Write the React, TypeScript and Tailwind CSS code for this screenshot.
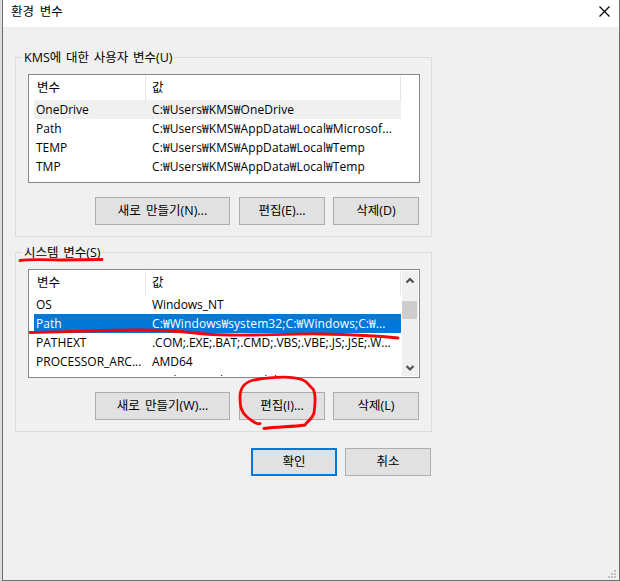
import { clsx } from "clsx";

type Variable = { name: string; value: string; active?: boolean };

const userVariables: Variable[] = [
  { name: "OneDrive", value: "C:₩Users₩KMS₩OneDrive", active: true },
  { name: "Path", value: "C:₩Users₩KMS₩AppData₩Local₩Microsof..." },
  { name: "TEMP", value: "C:₩Users₩KMS₩AppData₩Local₩Temp" },
  { name: "TMP", value: "C:₩Users₩KMS₩AppData₩Local₩Temp" },
];

const systemVariables: Variable[] = [
  { name: "OS", value: "Windows_NT" },
  { name: "Path", value: "C:₩Windows₩system32;C:₩Windows;C:₩...", active: true },
  { name: "PATHEXT", value: ".COM;.EXE;.BAT;.CMD;.VBS;.VBE;.JS;.JSE;.W..." },
  { name: "PROCESSOR_ARC...", value: "AMD64" },
  { name: "PROCESSOR_IDE...", value: "Intel64 Family 6 Model 158 Stepping 1..." },
];

const Button = ({
  label,
  wide,
  primary,
}: {
  label: string;
  wide?: boolean;
  primary?: boolean;
}) => (
  <button
    className={clsx(
      "flex h-7 items-center justify-center bg-[#e1e1e1] text-[12.5px] whitespace-nowrap [word-spacing:2px]",
      wide ? "mr-px w-[135px]" : "w-[86px]",
      primary ? "border-2 border-[#0078d7]" : "border border-[#adadad]",
    )}
  >
    {label}
  </button>
);

const ScrollBar = () => (
  <div className="mt-px mr-px flex h-[105px] w-4 flex-col bg-[#f0f0f0]">
    <svg className="h-[30px] w-4 shrink-0" viewBox="0 0 16 30" fill="none">
      <path d="M4.500 11.500 8 8l3.500 3.500" stroke="#505050" strokeWidth="2.2" />
    </svg>
    <div className="h-[18px] w-[15px] shrink-0 bg-[#cdcdcd]" />
    <svg className="mt-auto h-[17px] w-4 shrink-0" viewBox="0 0 16 17" fill="none">
      <path d="M4.500 7 8 10.500 11.500 7" stroke="#505050" strokeWidth="2.2" />
    </svg>
  </div>
);

const VariableList = ({
  rows,
  system,
}: {
  rows: Variable[];
  system?: boolean;
}) => (
  <div className="mt-2 ml-3 flex h-[109px] w-[392px] justify-between overflow-hidden border border-[#828790] bg-white">
    <div className="ml-[5px] h-[106px] w-[367px] overflow-hidden pt-px">
      <div className="flex h-6 text-[12.5px] leading-[23px]">
        <div className="w-28 border-r border-[#e5e5e5] pl-[3px]">변수</div>
        <div className="flex-1 border-r border-[#e5e5e5] pl-[6px]">값</div>
      </div>
      {rows.map((row) => (
        <div
          key={row.name}
          className={clsx(
            "flex h-[19px] text-[12px] leading-[19px] whitespace-nowrap",
            row.active && (system ? "bg-[#0078d7] text-white" : "bg-[#f0f0f0]"),
          )}
        >
          <div className="w-28 pl-[2px]">{row.name}</div>
          <div
            className={clsx(
              "flex-1 pl-[6px]",
              row.value.includes("₩") ? "tracking-[0.1px]" : "tracking-[-0.04px]",
            )}
          >
            {row.value}
          </div>
        </div>
      ))}
    </div>
    {system && <ScrollBar />}
  </div>
);

const VariableGroup = ({
  title,
  rows,
  keys,
  system,
}: {
  title: string;
  rows: Variable[];
  keys: [string, string, string];
  system?: boolean;
}) => (
  <fieldset className="h-[189px] w-[417px] border border-[#dcdcdc]">
    <legend className="ml-[6px] h-[18px] px-[2px] text-[12.5px] leading-[19px] whitespace-nowrap [word-spacing:1.5px]">
      {title}
    </legend>
    <VariableList rows={rows} system={system} />
    <div className="mt-[14px] mr-3 flex justify-end gap-2">
      <Button label={`새로 만들기(${keys[0]})...`} wide />
      <Button label={`편집(${keys[1]})...`} />
      <Button label={`삭제(${keys[2]})`} />
    </div>
  </fieldset>
);

const PenMarks = () => (
  <svg
    className="pointer-events-none absolute inset-0 h-[581px] w-[620px]"
    viewBox="0 0 620 581"
    fill="none"
    stroke="#fb0007"
    strokeWidth="2.8"
    strokeLinecap="round"
    strokeLinejoin="round"
  >
    <path d="M20 260.500C30 258.800 44 259.500 60 260L102 259.500" />
    <path d="M30 332.500C65 332 100 330 140 330C170 330 185 332 205 334C240 337 280 333.500 320 334C350 334.500 375 335.500 398 338" />
    <path d="M260 423.500C257 425 252 421 247 417C241 412 240 406 240 397C240 387 245 382 254 380C269 377.500 291 375.500 303 380C308 382 309 386 313 389C316 394 315 406 314 413C312 420 308 420 305 425C292 427 278 426.500 264 428.500" />
  </svg>
);

const App = () => {
  return (
    <div className="relative h-[581px] w-[620px] overflow-hidden bg-[#dedede] pl-[2px] font-['Open_Sans','Noto_Sans_CJK_KR',sans-serif] text-[12px] text-black">
      <div className="h-full border-x border-b border-[#707070] bg-[#f0f0f0]">
        <header className="flex h-[27px] items-center justify-between bg-white pr-[9px] pl-2">
          <span className="pb-[3px] text-[12.5px] [word-spacing:2.5px]">환경 변수</span>
          <svg className="mb-[5px] size-[11px]" viewBox="0 0 11 11" fill="none">
            <path d="m.5.5 10 10m0-10-10 10" stroke="#000" strokeWidth="1.2" />
          </svg>
        </header>
        <main className="mt-[21px] ml-3 flex w-[417px] flex-col gap-[6px]">
          <VariableGroup
            title="KMS에 대한 사용자 변수(U)"
            rows={userVariables}
            keys={["N", "E", "D"]}
          />
          <VariableGroup
            title="시스템 변수(S)"
            rows={systemVariables}
            keys={["W", "I", "L"]}
            system
          />
          <div className="mt-[10px] flex justify-end gap-2 pr-px">
            <Button label="확인" primary />
            <Button label="취소" />
          </div>
        </main>
      </div>
      <svg className="absolute right-1 bottom-[3px] size-2" viewBox="0 0 8 8" fill="#bfbfbf">
        <path d="M6 0h2v2H6zM3 3h2v2H3zM6 3h2v2H6zM0 6h2v2H0zM3 6h2v2H3zM6 6h2v2H6z" />
      </svg>
      <PenMarks />
    </div>
  );
};

export default App;
